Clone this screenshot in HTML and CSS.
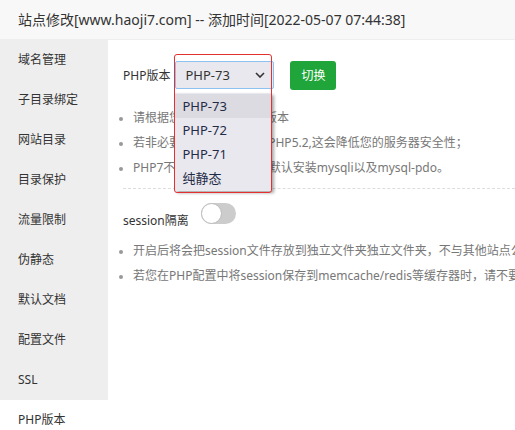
FILE: index.html
```html
<!DOCTYPE html>
<html lang="zh-CN">
<head>
    <meta charset="UTF-8">
    <meta name="viewport" content="width=device-width, initial-scale=1.0">
    <title>站点修改</title>
    <link rel="stylesheet" href="styles.css">
</head>
<body>
    <div class="layer-title">站点修改[www.haoji7.com] -- 添加时间[2022-05-07 07:44:38]</div>
    <div class="layer-body">
        <ul class="side-menu">
            <li>域名管理</li>
            <li>子目录绑定</li>
            <li>网站目录</li>
            <li>目录保护</li>
            <li>流量限制</li>
            <li>伪静态</li>
            <li>默认文档</li>
            <li>配置文件</li>
            <li>SSL</li>
            <li class="active">PHP版本</li>
        </ul>

        <div class="content">
            <div class="php-row">
                <span class="label">PHP版本</span>
                <div class="select-wrap">
                    <div class="select-box">
                        <span>PHP-73</span>
                        <svg class="chevron" width="10" height="6" viewBox="0 0 10 6">
                            <path d="M1 1l4 4 4-4" fill="none" stroke="#333" stroke-width="1.6"/>
                        </svg>
                    </div>
                    <ul class="select-options">
                        <li class="hover">PHP-73</li>
                        <li>PHP-72</li>
                        <li>PHP-71</li>
                        <li>纯静态</li>
                    </ul>
                    <div class="mark-box"></div>
                </div>
                <button class="btn-green">切换</button>
            </div>

            <ul class="help">
                <li>请根据您的程序需求选择版本</li>
                <li>若非必要,请尽量不要使用PHP5.2,这会降低您的服务器安全性；</li>
                <li>PHP7不支持mysql扩展，默认安装mysqli以及mysql-pdo。</li>
            </ul>

            <div class="line"></div>

            <div class="session-row">
                <span class="label">session隔离</span>
                <span class="switch"><span class="knob"></span></span>
            </div>

            <ul class="help help-session">
                <li>开启后将会把session文件存放到独立文件夹独立文件夹，不与其他站点公用存储位置</li>
                <li>若您在PHP配置中将session保存到memcache/redis等缓存器时，请不要开启此选项。</li>
            </ul>
        </div>
    </div>
</body>
</html>
```

FILE: styles.css
```css
body {
    margin: 0;
    padding: 0;
    font-family: "Noto Sans", "Noto Sans CJK SC", sans-serif;
    background: #fff;
    color: #333;
    overflow: hidden;
}

.layer-title {
    height: 39px;
    line-height: 39px;
    padding-left: 18px;
    font-size: 14px;
    color: #333;
    background: #f8f8f8;
    border-bottom: 1px solid #eee;
    white-space: nowrap;
}

.layer-body {
    display: flex;
}

.side-menu {
    list-style: none;
    margin: 0;
    padding: 0;
    width: 108px;
    flex-shrink: 0;
}

.side-menu li {
    height: 40px;
    line-height: 40px;
    padding-left: 18px;
    font-size: 12px;
    color: #333;
    background: #eee;
}

.side-menu li.active {
    background: #fff;
}

.content {
    flex: 1;
    padding: 21px 0 0 15px;
    font-size: 12px;
    white-space: nowrap;
    overflow: hidden;
}

.php-row {
    display: flex;
    align-items: center;
    height: 28px;
}

.label {
    color: #333;
    font-size: 12px;
}

.select-wrap {
    position: relative;
    margin-left: 5px;
}

.select-box {
    box-sizing: border-box;
    width: 99px;
    height: 28px;
    border: 1px solid #8cc2f2;
    border-radius: 2px;
    background: #e9e8ee;
    display: flex;
    align-items: center;
    justify-content: space-between;
    padding: 0 8px 0 9px;
    font-size: 13px;
    color: #333;
}

.select-options {
    position: absolute;
    top: 32px;
    left: 0;
    width: 97px;
    margin: 0;
    padding: 1px 0;
    list-style: none;
    background: #e9e8ee;
    box-shadow: 2px 2px 3px rgba(0, 0, 0, 0.35);
    z-index: 2;
}

.select-options li {
    height: 24px;
    line-height: 24px;
    padding-left: 7px;
    font-size: 13px;
    color: #1f2c48;
}

.select-options li.hover {
    background: #dcdbe1;
}

.mark-box {
    position: absolute;
    top: -7px;
    left: -1px;
    width: 96px;
    height: 137px;
    border: 1px solid #e53030;
    border-radius: 3px;
    z-index: 3;
}

.btn-green {
    margin-left: 16px;
    width: 46px;
    height: 29px;
    border: none;
    border-radius: 3px;
    background: #20a53a;
    color: #fff;
    font-family: inherit;
    font-size: 12px;
    padding: 0;
}

.help {
    list-style: disc;
    margin: 16px 0 0 0;
    padding-left: 10px;
    color: #777;
    font-size: 12px;
}

.help li {
    line-height: 25px;
}

.help li::marker {
    color: #999;
    font-size: 10px;
}

.help-session {
    margin-top: 9px;
}

.line {
    margin-top: 8px;
    border-top: 1px dashed #ddd;
}

.session-row {
    display: flex;
    align-items: center;
    margin-top: 14px;
    height: 26px;
}

.session-row .label {
    margin-top: 8px;
}

.switch {
    position: relative;
    display: inline-block;
    width: 35px;
    height: 21px;
    margin-left: 12px;
    margin-top: -6px;
    border-radius: 11px;
    background: #ccc;
}

.knob {
    position: absolute;
    top: 0;
    left: 0;
    width: 19px;
    height: 19px;
    border-radius: 50%;
    background: #fff;
    border: 1px solid #bbb;
}
```
